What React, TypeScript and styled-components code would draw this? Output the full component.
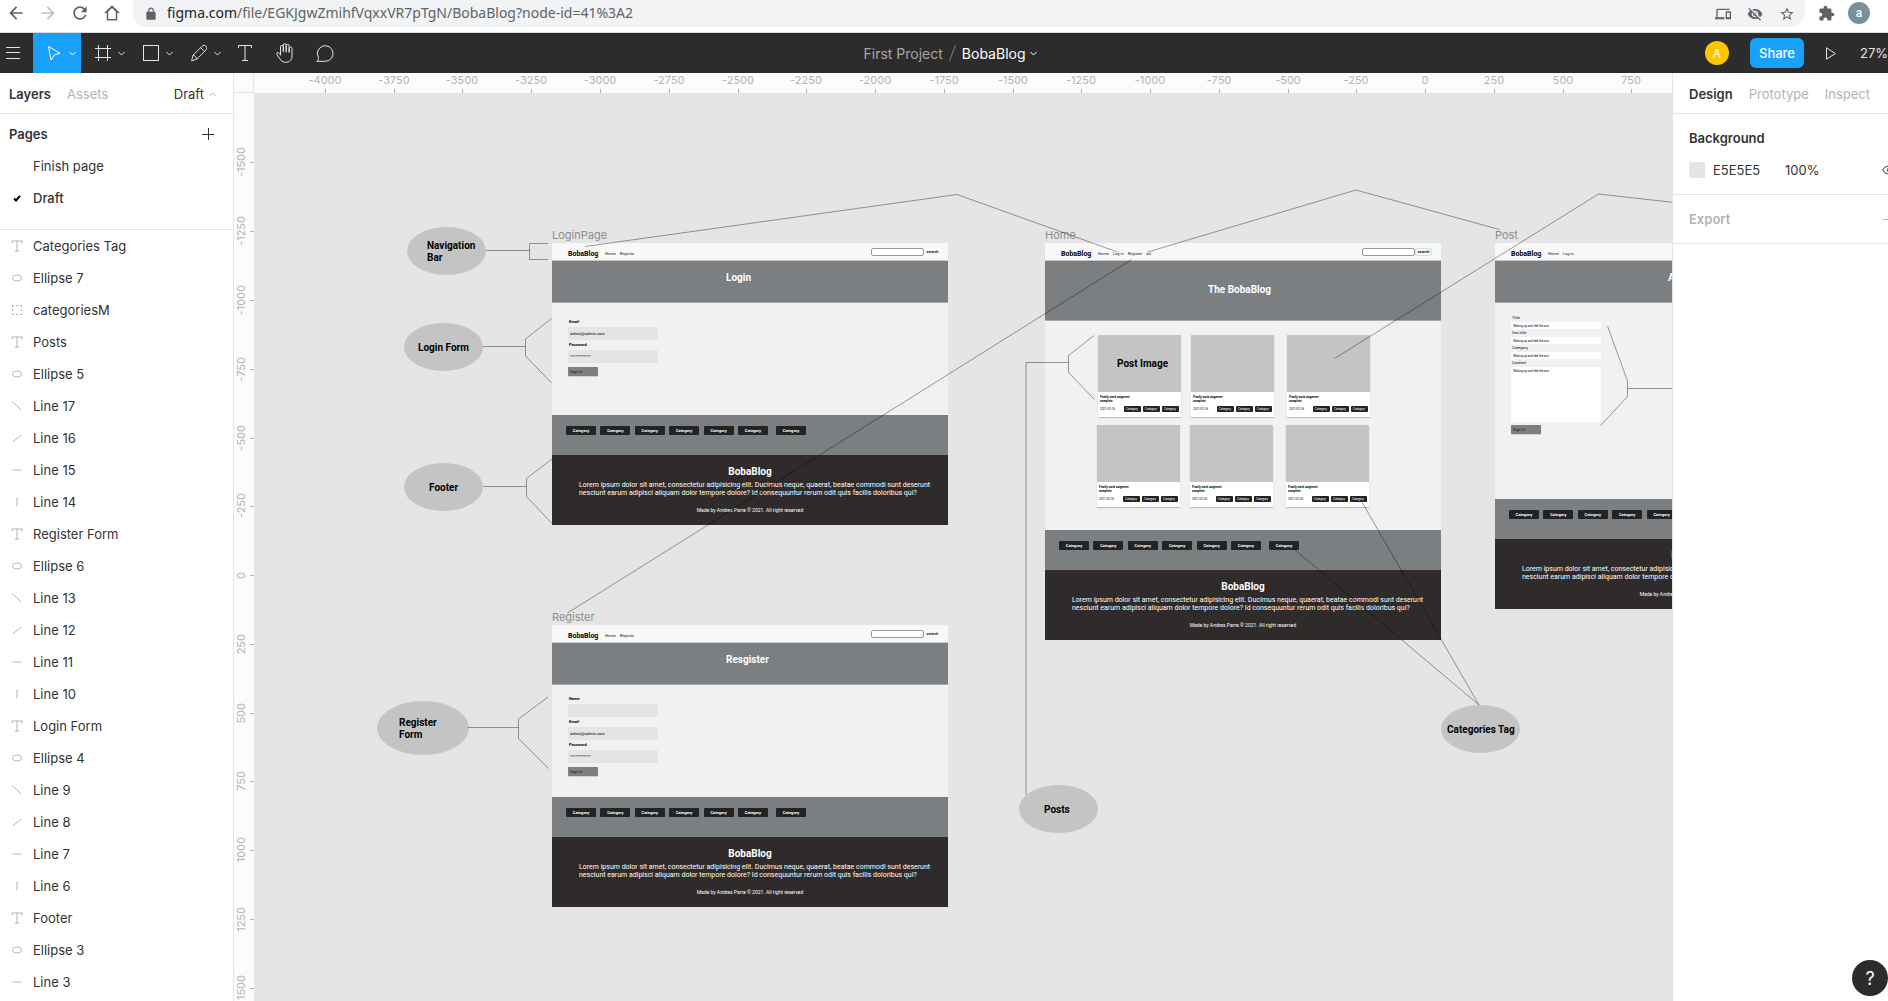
import React from "react";
import styled, { createGlobalStyle } from "styled-components";

const UI_FONT = `Inter, "Liberation Sans", sans-serif`;
const FRAME_FONT = `Roboto, "Liberation Sans", sans-serif`;

const GlobalStyle = createGlobalStyle`
  *, *::before, *::after { box-sizing: border-box; }
  html, body, #root { height: 100%; }
  body { margin: 0; overflow: hidden; background: #fff; font-family: ${UI_FONT}; }
  button, input, textarea { font: inherit; color: inherit; margin: 0; }
  button { border: 0; background: none; padding: 0; cursor: pointer; }
  ul { list-style: none; margin: 0; padding: 0; }
  h1, h2, h3, p { margin: 0; font-weight: inherit; font-size: inherit; }
  svg { display: block; flex: none; }
`;

const Page = styled.div`
  display: flex;
  flex-direction: column;
  height: 100vh;
  overflow: hidden;
`;

/* ---------- browser bar ---------- */

const BrowserBar = styled.header`
  display: flex;
  align-items: flex-start;
  flex: none;
  height: 33px;
  border-bottom: 1px solid #dadce0;
  background: #fff;
  color: #5f6368;
`;

const BrowserButton = styled.button<{ $dim?: boolean; $width?: number }>`
  display: flex;
  align-items: center;
  justify-content: center;
  width: ${(p) => p.$width ?? 32}px;
  height: 26px;
  color: ${(p) => (p.$dim ? "#bdc1c6" : "#5f6368")};
`;

const NavButtons = styled.div`
  display: flex;
  width: 133px;
`;

const AddressBar = styled.div`
  display: flex;
  align-items: center;
  flex: 1;
  min-width: 0;
  height: 27px;
  padding: 0 2px 0 11px;
  border-radius: 0 0 14px 14px;
  background: #f1f3f4;
`;

const AddressText = styled.a`
  flex: 1;
  min-width: 0;
  margin-left: 9px;
  color: #5f6368;
  font: 14px/24px "Noto Sans", sans-serif;
  height: 26px;
  text-decoration: none;
  white-space: nowrap;
  b { font-weight: 400; color: #202124; }
`;

const ProfileBadge = styled.button`
  width: 22px;
  height: 22px;
  margin: 2px 18px 0 0;
  border-radius: 50%;
  background: #78909c;
  color: #fff;
  font: 500 12px/20px Roboto, sans-serif;
`;

/* ---------- toolbar ---------- */

const Toolbar = styled.nav`
  display: grid;
  grid-template-columns: 1fr auto 1fr;
  align-items: center;
  flex: none;
  height: 40px;
  background: #2c2c2c;
  color: #fff;
`;

const Tools = styled.div`
  display: flex;
  height: 40px;
`;

const Tool = styled.button`
  display: flex;
  align-items: center;
  justify-content: center;
  width: 40px;
  color: #e5e5e5;
`;

const MenuTool = styled(Tool)`
  justify-content: flex-start;
  width: 33px;
  padding-left: 6px;
`;

const DropTool = styled(Tool)<{ $active?: boolean }>`
  justify-content: flex-start;
  gap: 7px;
  width: 48px;
  padding-left: 14px;
  color: ${(p) => (p.$active ? "#fff" : "#e5e5e5")};
  background: ${(p) => (p.$active ? "#18a0fb" : "transparent")};
`;

const FileTitle = styled.div`
  display: flex;
  align-items: center;
  gap: 6px;
  padding-left: 12px;
  font-size: 14px;
`;

const ProjectLink = styled.a`
  color: #a6a6a6;
  text-decoration: none;
`;

const FileButton = styled.button`
  display: flex;
  align-items: center;
  gap: 4px;
`;

const Actions = styled.div`
  display: flex;
  align-items: center;
  justify-content: flex-end;
`;

const UserBadge = styled.button`
  width: 24px;
  height: 24px;
  border-radius: 50%;
  background: #ffc700;
  font-size: 12px;
`;

const ShareButton = styled.button`
  width: 54px;
  height: 30px;
  margin: 0 22px 0 21px;
  border-radius: 6px;
  background: #18a0fb;
  font-size: 13px;
  font-weight: 500;
`;

const ZoomButton = styled.button`
  width: 28px;
  margin-left: 24px;
  color: #e5e5e5;
  font-size: 13px;
  text-align: left;
`;

/* ---------- side panels ---------- */

const Workspace = styled.div`
  display: flex;
  flex: 1;
  min-height: 0;
`;

const LeftPanel = styled.aside`
  display: flex;
  flex-direction: column;
  flex: 0 0 234px;
  border-right: 1px solid #e5e5e5;
  background: #fff;
  color: #333;
  font-size: 13px;
  overflow: hidden;
`;

const RightPanel = styled.aside`
  flex: 0 0 216px;
  border-left: 1px solid #e5e5e5;
  background: #fff;
  color: #333;
  font-size: 13px;
  overflow: hidden;
`;

const Tabs = styled.div<{ $pad: number }>`
  display: flex;
  align-items: center;
  flex: none;
  gap: 16px;
  height: 41px;
  padding: 2px 17px 0 ${(p) => p.$pad}px;
  border-bottom: 1px solid #e5e5e5;
`;

const Tab = styled.button<{ $active?: boolean }>`
  font-weight: ${(p) => (p.$active ? 600 : 400)};
  color: ${(p) => (p.$active ? "#333" : "#b3b3b3")};
`;

const PageSwitch = styled.button`
  display: flex;
  align-items: center;
  gap: 5px;
  margin-left: auto;
  svg { color: #b3b3b3; }
`;

const Pages = styled.section`
  flex: none;
  height: 116px;
  border-bottom: 1px solid #e5e5e5;
`;

const PagesHeader = styled.div`
  display: flex;
  align-items: center;
  justify-content: space-between;
  height: 36px;
  padding: 4px 19px 0 9px;
  font-weight: 600;
`;

const PageRow = styled.button<{ $current?: boolean }>`
  display: flex;
  align-items: center;
  width: 100%;
  height: 32px;
  font-weight: ${(p) => (p.$current ? 500 : 400)};
`;

const IconSlot = styled.span`
  display: flex;
  justify-content: center;
  flex: none;
  width: 33px;
  color: #b3b3b3;
`;

const CheckSlot = styled(IconSlot)`
  color: #000;
`;

const LayerList = styled.ul`
  flex: 1;
  min-height: 0;
  overflow: hidden;
`;

const LayerRow = styled.button`
  display: flex;
  align-items: center;
  width: 100%;
  height: 32px;
  text-align: left;
`;

const PropertySection = styled.section<{ $height: number; $muted?: boolean }>`
  display: flex;
  flex-direction: column;
  justify-content: center;
  gap: 15px;
  height: ${(p) => p.$height}px;
  padding-left: 16px;
  border-bottom: 1px solid #e5e5e5;
  color: ${(p) => (p.$muted ? "#b3b3b3" : "#333")};
`;

const PropertyTitle = styled.h2`
  display: flex;
  align-items: center;
  justify-content: space-between;
  font-weight: 600;
`;

const PropertyRow = styled.div`
  display: grid;
  grid-template-columns: 24px 72px 97px 6px;
  align-items: center;
  height: 17px;
`;

const Swatch = styled.span`
  width: 16px;
  height: 16px;
  background: #e5e5e5;
`;

const PropertyInput = styled.input`
  width: 64px;
  height: 17px;
  padding: 0;
  border: 0;
  outline: 0;
  background: none;
`;

const ClippedIcon = styled.span`
  width: 6px;
  overflow: hidden;
`;

const HelpButton = styled.button`
  position: fixed;
  right: 0;
  bottom: 5px;
  width: 36px;
  height: 36px;
  border-radius: 50%;
  background: #2c2c2c;
  color: #fff;
  font-size: 18px;
`;

/* ---------- canvas and rulers ---------- */

const Stage = styled.main`
  display: grid;
  grid-template-columns: 20px 1fr;
  grid-template-rows: 20px 1fr;
  flex: 1;
  min-width: 0;
  background: #fcfcfc;
`;

const RulerCorner = styled.div`
  border-right: 1px solid #e5e5e5;
  border-bottom: 1px solid #e5e5e5;
`;

const Ruler = styled.div`
  position: relative;
  overflow: hidden;
  color: #b3b3b3;
  font-size: 11px;
  line-height: 15px;
`;

const TopMark = styled.span`
  position: absolute;
  top: 0;
  display: flex;
  flex-direction: column;
  align-items: center;
  justify-content: space-between;
  width: 40px;
  height: 20px;
  margin-left: -20px;
  &::after { content: ""; width: 1px; height: 4px; background: #b3b3b3; }
`;

const SideMark = styled.span`
  position: absolute;
  left: 0;
  display: flex;
  align-items: center;
  justify-content: space-between;
  width: 20px;
  height: 40px;
  margin-top: -20px;
  &::after { content: ""; width: 4px; height: 1px; background: #b3b3b3; }
`;

const SideLabel = styled.span`
  writing-mode: vertical-rl;
  rotate: 180deg;
`;

const Canvas = styled.div`
  position: relative;
  overflow: hidden;
  background: #e5e5e5;
  font-family: ${FRAME_FONT};
`;

const Connectors = styled.svg`
  position: absolute;
  inset: 0;
  width: 100%;
  height: 100%;
  pointer-events: none;
`;

const Bubble = styled.div<{ $x: number; $y: number; $inset: number; $large?: boolean }>`
  position: absolute;
  left: ${(p) => p.$x}px;
  top: ${(p) => p.$y}px;
  display: flex;
  align-items: center;
  width: ${(p) => (p.$large ? 92 : 79)}px;
  height: ${(p) => (p.$large ? 54 : 48)}px;
  padding: 1px 0 0 ${(p) => p.$inset}px;
  border-radius: 50%;
  background: #c4c4c4;
  color: #000;
  font-size: 10px;
  font-weight: 700;
  line-height: 12px;
  white-space: pre;
`;

/* ---------- wireframe frames ---------- */

const FrameBox = styled.article<{ $x: number; $y: number }>`
  position: absolute;
  left: ${(p) => p.$x}px;
  top: ${(p) => p.$y}px;
  width: 396px;
`;

const FrameName = styled.h2`
  height: 16px;
  color: #8c8c8c;
  font: 400 11px/16px ${UI_FONT};
`;

const SiteHeader = styled.div`
  display: flex;
  align-items: center;
  height: 18px;
  padding: 4px 9px 0 16px;
  border-bottom: 1px solid #c8c8c8;
  background: #f8f8f8;
  color: #000;
`;

const Brand = styled.span`
  width: 37px;
  font-size: 7px;
  font-weight: 700;
  line-height: 8px;
`;

const SiteNav = styled.nav`
  display: flex;
  gap: 4px;
  font-size: 4px;
  line-height: 8px;
`;

const NavLink = styled.a`
  color: #222;
  text-decoration: none;
`;

const SearchGroup = styled.div<{ $outlined?: boolean }>`
  display: flex;
  align-items: center;
  gap: ${(p) => (p.$outlined ? 0 : 2)}px;
  height: 8px;
  margin: 0 0 4px auto;
`;

const SearchInput = styled.input`
  width: 53px;
  height: 8px;
  padding: 0 1px;
  border: 1px solid #999;
  border-radius: 2px;
  background: #fff;
  font-size: 4px;
`;

const SearchButton = styled.button<{ $outlined?: boolean }>`
  width: ${(p) => (p.$outlined ? 17 : 13)}px;
  height: 8px;
  border: ${(p) => (p.$outlined ? "1px solid #cfe8cf" : "0")};
  border-radius: 2px;
  font-size: 4px;
  font-weight: 500;
  line-height: 6px;
`;

const Hero = styled.div<{ $tall?: boolean; $indent: number }>`
  height: ${(p) => (p.$tall ? 60 : 42)}px;
  padding: ${(p) => (p.$tall ? 23 : 11)}px 0 0 ${(p) => p.$indent}px;
  border-bottom: 1px solid #a8aaab;
  background: #7b7f82;
  color: #fff;
  font-size: 10px;
  font-weight: 700;
  line-height: 12px;
  white-space: nowrap;
`;

const SiteBody = styled.div<{ $height: number }>`
  height: ${(p) => p.$height}px;
  background: #f1f1f1;
`;

const Form = styled.form<{ $top: number; $gap: number }>`
  display: flex;
  flex-direction: column;
  gap: ${(p) => p.$gap}px;
  width: 106px;
  padding: ${(p) => p.$top}px 0 0 16px;
  color: #000;
`;

const Field = styled.div<{ $gap: number }>`
  display: flex;
  flex-direction: column;
  gap: ${(p) => p.$gap}px;
`;

const FieldLabel = styled.label<{ $bold?: boolean }>`
  padding-left: 1px;
  font-size: 4px;
  font-weight: ${(p) => (p.$bold ? 700 : 400)};
  line-height: 6px;
`;

const FieldInput = styled.input<{ $small?: boolean }>`
  width: 90px;
  height: ${(p) => (p.$small ? 7 : 13)}px;
  padding: 0 2px;
  border: 0;
  border-radius: 1px;
  outline: 0;
  background: ${(p) => (p.$small ? "#fff" : "#e5e5e5")};
  font-size: ${(p) => (p.$small ? 3 : 4)}px;
`;

const FieldArea = styled.textarea`
  width: 90px;
  height: 55px;
  padding: 2px;
  border: 0;
  border-radius: 1px;
  outline: 0;
  resize: none;
  background: #fff;
  font-size: 3px;
  line-height: 4px;
`;

const SubmitButton = styled.button`
  width: 30px;
  height: 9px;
  margin-top: 2px;
  padding-left: 2px;
  border-radius: 1px;
  background: #7b7f82;
  box-shadow: 0 1px 1px rgba(0, 0, 0, 0.15);
  color: #111;
  font-size: 4px;
  line-height: 9px;
  text-align: left;
`;

const CategoryBar = styled.div`
  display: flex;
  align-items: flex-start;
  gap: 8px;
  height: 40px;
  padding: 11px 0 0 14px;
  background: #7b7f82;
`;

const CategoryRow = styled.div`
  display: flex;
  justify-content: space-between;
  width: 202px;
`;

const CategoryButton = styled.button`
  width: 30px;
  height: 9px;
  border-radius: 1px;
  background: #222325;
  color: #fff;
  font-size: 4px;
  font-weight: 700;
  line-height: 9px;
  text-align: center;
`;

const SiteFooter = styled.footer`
  height: 70px;
  padding: 11px 0 0 27px;
  background: #2f2b2a;
  color: #fff;
`;

const FooterTitle = styled.h3`
  padding-right: 27px;
  font-size: 10px;
  font-weight: 700;
  line-height: 12px;
  text-align: center;
`;

const FooterText = styled.p`
  margin-top: 3px;
  font-size: 7px;
  line-height: 8px;
  white-space: pre;
`;

const FooterNote = styled.p`
  margin-top: 10px;
  padding-right: 27px;
  font-size: 5px;
  line-height: 6px;
  text-align: center;
`;

const PostGrid = styled.div<{ $top: number; $left: number }>`
  display: grid;
  grid-template-columns: 93px 96px 83px;
  padding: ${(p) => p.$top}px 0 0 ${(p) => p.$left}px;
`;

const PostCard = styled.div`
  width: 83px;
  height: 82px;
  background: #fff;
  box-shadow: 0 1px 1px rgba(0, 0, 0, 0.2);
  color: #000;
`;

const PostPicture = styled.div`
  height: 57px;
  padding: 23px 0 0 19px;
  background: #c4c4c4;
  font-size: 10px;
  font-weight: 700;
  line-height: 12px;
`;

const PostName = styled.h3`
  padding: 3px 2px 0;
  font-size: 3px;
  font-weight: 700;
  line-height: 4px;
  white-space: pre;
`;

const PostMeta = styled.div`
  display: flex;
  align-items: center;
  gap: 2px;
  margin-top: 3px;
  padding: 0 2px;
`;

const PostDate = styled.span`
  flex: 1;
  font-size: 3px;
  line-height: 6px;
`;

const PostTag = styled.button`
  width: 17px;
  height: 6px;
  padding-left: 2px;
  border-radius: 1px;
  background: #222325;
  color: #fff;
  font-size: 3px;
  line-height: 6px;
  text-align: left;
`;

/* ---------- icons ---------- */

const Chevron = ({ up = false }: { up?: boolean }) => (
  <svg width="7" height="5" viewBox="0 0 7 5" fill="none" stroke="currentColor">
    <path d={up ? "M.5 4 3.5 1l3 3" : "M.5 1 3.5 4l3-3"} />
  </svg>
);

const toolIcons = {
  menu: (
    <svg width="14" height="12" viewBox="0 0 14 12" stroke="currentColor">
      <path d="M0 .5h14M0 5.500h14M0 11.500h14" />
    </svg>
  ),
  move: (
    <svg width="15" height="18" viewBox="0 0 15 18" fill="none" stroke="currentColor" strokeLinejoin="round">
      <path d="M1.500 2.500 13 9.300 7.500 10.800 4 16z" />
    </svg>
  ),
  frame: (
    <svg width="16" height="16" viewBox="0 0 16 16" fill="none" stroke="currentColor">
      <path d="M3.500 0v16M12.500 0v16M0 3.500h16M0 12.500h16" />
    </svg>
  ),
  rect: (
    <svg width="16" height="16" viewBox="0 0 16 16" fill="none" stroke="currentColor">
      <rect x=".5" y=".5" width="15" height="15" />
    </svg>
  ),
  pen: (
    <svg width="16" height="18" viewBox="0 0 17 18" fill="none" stroke="currentColor" strokeLinejoin="round">
      <path d="M.7 17.300 2 11.500 12 1.700a2.700 2.700 0 0 1 4 4L6 15.700zM10.300 3.400l4 4M2 11.500c2 0 4 2 4 4.200" />
    </svg>
  ),
  text: (
    <svg width="14" height="16" viewBox="0 0 14 16" fill="none" stroke="currentColor">
      <path d="M.5 3V.5h13V3M7 .5v15M4 15.500h6" />
    </svg>
  ),
  hand: (
    <svg width="18" height="20" viewBox="0 0 18 20" fill="none" stroke="currentColor" strokeLinejoin="round" strokeLinecap="round">
      <path d="M4.500 12V3.800a1.400 1.400 0 0 1 2.800 0V9M7.300 8V2a1.400 1.400 0 0 1 2.900 0v7M10.200 8V2.800a1.400 1.400 0 0 1 2.900 0V9M13.100 9V5.500a1.400 1.400 0 0 1 2.900 0V13c0 3.500-2 6.300-6.200 6.300-3.500 0-4.800-1.500-6.300-4L.9 11.500c-.6-1.700 1-2.700 2.200-1.300l1.400 1.600" />
    </svg>
  ),
  comment: (
    <svg width="18" height="17" viewBox="0 0 18 17" fill="none" stroke="currentColor" strokeLinejoin="round">
      <path d="M.7 16.300c1.600-.7 2-2 1.700-4A7.800 7.800 0 1 1 9.600 16.300z" />
    </svg>
  ),
};

type LayerKind = "text" | "ellipse" | "group" | "down" | "up" | "flat" | "tall";

const layerPaths: Record<LayerKind, React.ReactNode> = {
  text: <path d="M1 3.500V1h10v2.500M6 1v10M4 11h4" />,
  ellipse: <ellipse cx="6" cy="6" rx="4.500" ry="3" />,
  group: <path d="M1.500 3V1.500H3M5 1.500h2M9 1.500h1.500V3M10.500 5v2M10.500 9v1.500H9M7 10.500H5M3 10.500H1.500V9M1.500 7V5" />,
  down: <path d="M1.500 1.500l9 9" />,
  up: <path d="M1.500 10l9-7" />,
  flat: <path d="M1.500 6h9" />,
  tall: <path d="M6 1.500v9" />,
};

const LayerIcon = ({ kind }: { kind: LayerKind }) => (
  <svg width="12" height="12" viewBox="0 0 12 12" fill="none" stroke="currentColor">
    {layerPaths[kind]}
  </svg>
);

const materialPaths = {
  back: "M20 11H7.830l5.590-5.590L12 4l-8 8 8 8 1.410-1.410L7.830 13H20v-2z",
  forward: "M12 4l-1.410 1.410L16.170 11H4v2h12.170l-5.580 5.590L12 20l8-8z",
  reload:
    "M17.650 6.350A7.958 7.958 0 0 0 12 4c-4.420 0-7.990 3.580-7.990 8s3.570 8 7.990 8c3.730 0 6.840-2.550 7.730-6h-2.080A5.990 5.990 0 0 1 12 18c-3.310 0-6-2.690-6-6s2.690-6 6-6c1.660 0 3.140.69 4.220 1.780L13 11h7V4l-2.350 2.350z",
  home: "M12 1.500 1.500 12H5v10h14V12h3.500L12 1.500zM7 20v-9.700l5-5 5 5V20z",
  lock: "M18 8h-1V6c0-2.760-2.240-5-5-5S7 3.240 7 6v2H6c-1.100 0-2 .9-2 2v10c0 1.100.9 2 2 2h12c1.100 0 2-.9 2-2V10c0-1.100-.9-2-2-2zM9 6a3 3 0 0 1 6 0v2H9z",
  devices:
    "M4 6h18V4H4c-1.100 0-2 .9-2 2v11H0v3h14v-3H4V6zm19 2h-6c-.55 0-1 .45-1 1v10c0 .55.45 1 1 1h6c.55 0 1-.45 1-1V9c0-.55-.45-1-1-1zm-1 9h-4v-7h4v7z",
  eyeOff:
    "M12 7c2.760 0 5 2.240 5 5 0 .65-.13 1.260-.36 1.830l2.920 2.920c1.510-1.260 2.700-2.890 3.430-4.750-1.730-4.390-6-7.500-11-7.500-1.400 0-2.740.25-3.980.7l2.160 2.160C10.740 7.130 11.350 7 12 7zM2 4.270l2.280 2.280.46.46A11.800 11.800 0 0 0 1 12c1.730 4.390 6 7.500 11 7.500 1.550 0 3.030-.3 4.380-.84l.42.42L19.730 22 21 20.730 3.270 3 2 4.270zM7.530 9.800l1.550 1.550c-.05.21-.08.43-.08.65 0 1.660 1.340 3 3 3 .22 0 .44-.03.65-.08l1.550 1.550c-.67.33-1.410.53-2.200.53-2.760 0-5-2.240-5-5 0-.79.2-1.530.53-2.200zm4.310-.78 3.150 3.150.02-.16c0-1.660-1.340-3-3-3l-.17.01z",
  star: "M22 9.240l-7.190-.62L12 2 9.190 8.630 2 9.240l5.460 4.730L5.820 21 12 17.270 18.180 21l-1.630-7.030L22 9.240zM12 15.400l-3.760 2.270 1-4.280-3.320-2.880 4.380-.38L12 6.100l1.710 4.040 4.380.38-3.320 2.880 1 4.280L12 15.400z",
  puzzle:
    "M20.500 11H19V7c0-1.100-.9-2-2-2h-4V3.500a2.500 2.500 0 0 0-5 0V5H4c-1.100 0-1.990.9-1.990 2v3.800H3.500c1.490 0 2.700 1.210 2.700 2.700s-1.210 2.700-2.700 2.700H2V20c0 1.100.9 2 2 2h3.800v-1.500c0-1.490 1.210-2.700 2.700-2.700s2.700 1.210 2.700 2.700V22H17c1.100 0 2-.9 2-2v-4h1.500a2.500 2.500 0 0 0 0-5z",
};

const MaterialIcon = ({ name, size = 18 }: { name: keyof typeof materialPaths; size?: number }) => (
  <svg width={size} height={size} viewBox="0 0 24 24" fill="currentColor" fillRule="evenodd">
    <path d={materialPaths[name]} />
  </svg>
);

/* ---------- data ---------- */

const layers: [LayerKind, string][] = [
  ["text", "Categories Tag"],
  ["ellipse", "Ellipse 7"],
  ["group", "categoriesM"],
  ["text", "Posts"],
  ["ellipse", "Ellipse 5"],
  ["down", "Line 17"],
  ["up", "Line 16"],
  ["flat", "Line 15"],
  ["tall", "Line 14"],
  ["text", "Register Form"],
  ["ellipse", "Ellipse 6"],
  ["down", "Line 13"],
  ["up", "Line 12"],
  ["flat", "Line 11"],
  ["tall", "Line 10"],
  ["text", "Login Form"],
  ["ellipse", "Ellipse 4"],
  ["down", "Line 9"],
  ["up", "Line 8"],
  ["flat", "Line 7"],
  ["tall", "Line 6"],
  ["text", "Footer"],
  ["ellipse", "Ellipse 3"],
  ["flat", "Line 3"],
];

const ZOOM = 0.275;
const ORIGIN_X = 1171;
const ORIGIN_Y = 482;
const marks = (from: number, to: number) =>
  Array.from({ length: (to - from) / 250 + 1 }, (_, i) => from + i * 250);

const connectorPaths = [
  "M486 250.500H529.500M548 243.500H529.500V259.500H548",
  "M483 346.500H525.500M551.500 318.500L525.500 339V356L551.500 383",
  "M483 486.500H526.500M552 459L526.500 478.500V496.500L552 523.500",
  "M468 727.500H518.500M548 697L518.500 719V738.500L548.500 768.500",
  "M585 246.500L957 194.500L1117.500 252",
  "M1147.500 252L1356 190L1499.500 229.500",
  "M1334.500 358.500L1598.500 194L1760 212",
  "M1131.500 259.500L567.500 613",
  "M1026 795V362.500H1068.500M1094 335.500L1068.500 355.500V372.500L1094.500 399.500",
  "M1362.500 503L1479 705L1294 549",
  "M1607.500 326L1627.500 381V396.500L1600.500 425.500M1627.500 388.500H1760",
];

/* ---------- frame parts ---------- */

type FrameProps = {
  name: string;
  x: number;
  y: number;
  nav: string[];
  outlinedSearch?: boolean;
  title: string;
  titleIndent: number;
  tallHero?: boolean;
  bodyHeight: number;
  children: React.ReactNode;
};

const SiteFrame = (p: FrameProps) => (
  <FrameBox $x={p.x} $y={p.y}>
    <FrameName>{p.name}</FrameName>
    <SiteHeader>
      <Brand>BobaBlog</Brand>
      <SiteNav>
        {p.nav.map((item) => (
          <NavLink key={item} href="#">{item}</NavLink>
        ))}
      </SiteNav>
      <SearchGroup $outlined={p.outlinedSearch}>
        <SearchInput aria-label={`Search ${p.name}`} />
        <SearchButton $outlined={p.outlinedSearch}>search</SearchButton>
      </SearchGroup>
    </SiteHeader>
    <Hero $tall={p.tallHero} $indent={p.titleIndent}>{p.title}</Hero>
    <SiteBody $height={p.bodyHeight}>{p.children}</SiteBody>
    <CategoryBar>
      <CategoryRow>
        {[1, 2, 3, 4, 5, 6].map((n) => (
          <CategoryButton key={n}>Category</CategoryButton>
        ))}
      </CategoryRow>
      <CategoryButton>Category</CategoryButton>
    </CategoryBar>
    <SiteFooter>
      <FooterTitle>BobaBlog</FooterTitle>
      <FooterText>
        {"Lorem ipsum dolor sit amet, consectetur adipisicing elit. Ducimus neque, quaerat, beatae commodi sunt deserunt\nnesciunt earum adipisci aliquam dolor tempore dolore? Id consequuntur rerum odit quis facilis doloribus qui?"}
      </FooterText>
      <FooterNote>Made by Andres Parra © 2021. All right reserved</FooterNote>
    </SiteFooter>
  </FrameBox>
);

const AccountForm = ({ id, top, fields }: { id: string; top: number; fields: [string, string][] }) => (
  <Form $top={top} $gap={2}>
    {fields.map(([label, value]) => (
      <Field key={label} $gap={2}>
        <FieldLabel $bold htmlFor={`${id}-${label}`}>{label}</FieldLabel>
        <FieldInput id={`${id}-${label}`} defaultValue={value} />
      </Field>
    ))}
    <SubmitButton type="button">Sign In</SubmitButton>
  </Form>
);

const PostRow = ({ top, left, caption }: { top: number; left: number; caption?: string }) => (
  <PostGrid $top={top} $left={left}>
    {[0, 1, 2].map((n) => (
      <PostCard key={n}>
        <PostPicture>{n === 0 ? caption : null}</PostPicture>
        <PostName>{"Finally work asigment\ncomplete"}</PostName>
        <PostMeta>
          <PostDate>2021-02-26</PostDate>
          <PostTag>Category</PostTag>
          <PostTag>Category</PostTag>
          <PostTag>Category</PostTag>
        </PostMeta>
      </PostCard>
    ))}
  </PostGrid>
);

const sample = "Waking up and feel the sun";

export default function App() {
  return (
    <Page>
      <GlobalStyle />
      <BrowserBar>
        <NavButtons>
          <BrowserButton aria-label="Back"><MaterialIcon name="back" size={20} /></BrowserButton>
          <BrowserButton aria-label="Forward" $dim><MaterialIcon name="forward" size={20} /></BrowserButton>
          <BrowserButton aria-label="Reload"><MaterialIcon name="reload" size={20} /></BrowserButton>
          <BrowserButton aria-label="Home"><MaterialIcon name="home" size={18} /></BrowserButton>
        </NavButtons>
        <AddressBar>
          <MaterialIcon name="lock" size={14} />
          <AddressText href="#"><b>figma.com</b>/file/EGKJgwZmihfVqxxVR7pTgN/BobaBlog?node-id=41%3A2</AddressText>
          <BrowserButton aria-label="Send to device"><MaterialIcon name="devices" size={16} /></BrowserButton>
          <BrowserButton aria-label="Tracking blocked"><MaterialIcon name="eyeOff" size={16} /></BrowserButton>
          <BrowserButton aria-label="Bookmark"><MaterialIcon name="star" size={16} /></BrowserButton>
        </AddressBar>
        <BrowserButton aria-label="Extensions" $width={43}><MaterialIcon name="puzzle" size={17} /></BrowserButton>
        <ProfileBadge>a</ProfileBadge>
      </BrowserBar>

      <Toolbar>
        <Tools>
          <MenuTool aria-label="Menu">{toolIcons.menu}</MenuTool>
          <DropTool aria-label="Move" $active>{toolIcons.move}<Chevron /></DropTool>
          <DropTool aria-label="Frame">{toolIcons.frame}<Chevron /></DropTool>
          <DropTool aria-label="Rectangle">{toolIcons.rect}<Chevron /></DropTool>
          <DropTool aria-label="Pen">{toolIcons.pen}<Chevron /></DropTool>
          <Tool aria-label="Text">{toolIcons.text}</Tool>
          <Tool aria-label="Hand">{toolIcons.hand}</Tool>
          <Tool aria-label="Comment">{toolIcons.comment}</Tool>
        </Tools>
        <FileTitle>
          <ProjectLink href="#">First Project</ProjectLink>
          <svg width="7" height="16" viewBox="0 0 7 16" stroke="#808080"><path d="M6.500 0l-6 16" /></svg>
          <FileButton>BobaBlog <Chevron /></FileButton>
        </FileTitle>
        <Actions>
          <UserBadge>A</UserBadge>
          <ShareButton>Share</ShareButton>
          <svg width="10" height="13" viewBox="0 0 10 13" fill="none" stroke="#e5e5e5" strokeLinejoin="round">
            <path d="M.5 .8v11.400L9.300 6.500z" />
          </svg>
          <ZoomButton>27%</ZoomButton>
        </Actions>
      </Toolbar>

      <Workspace>
        <LeftPanel>
          <Tabs $pad={9}>
            <Tab $active>Layers</Tab>
            <Tab>Assets</Tab>
            <PageSwitch>Draft <Chevron up /></PageSwitch>
          </Tabs>
          <Pages>
            <PagesHeader>
              <h2>Pages</h2>
              <button aria-label="Add page">
                <svg width="12" height="12" viewBox="0 0 12 12" stroke="currentColor"><path d="M6.500 0v12M0 6.500h12" /></svg>
              </button>
            </PagesHeader>
            <PageRow><IconSlot />Finish page</PageRow>
            <PageRow $current>
              <CheckSlot>
                <svg width="8" height="7" viewBox="0 0 8 7" fill="none" stroke="currentColor" strokeWidth="2"><path d="M1 3.500l2 2L7 .8" /></svg>
              </CheckSlot>
              Draft
            </PageRow>
          </Pages>
          <LayerList>
            {layers.map(([kind, name]) => (
              <li key={name}>
                <LayerRow><IconSlot><LayerIcon kind={kind} /></IconSlot>{name}</LayerRow>
              </li>
            ))}
          </LayerList>
        </LeftPanel>

        <Stage>
          <RulerCorner />
          <Ruler>
            {marks(-4000, 750).map((v) => (
              <TopMark key={v} style={{ left: Math.round(ORIGIN_X + v * ZOOM) }}>{v}</TopMark>
            ))}
          </Ruler>
          <Ruler>
            {marks(-1500, 1500).map((v) => (
              <SideMark key={v} style={{ top: Math.round(ORIGIN_Y + v * ZOOM) }}><SideLabel>{v}</SideLabel></SideMark>
            ))}
          </Ruler>
          <Canvas>
            <SiteFrame name="LoginPage" x={298} y={134} nav={["Home", "Register"]} title="Login" titleIndent={174} bodyHeight={112}>
              <AccountForm id="login" top={16} fields={[["Email", "admin@admin.com"], ["Password", "************"]]} />
            </SiteFrame>
            <SiteFrame name="Register" x={298} y={516} nav={["Home", "Register"]} title="Resgister" titleIndent={174} bodyHeight={112}>
              <AccountForm id="register" top={11} fields={[["Name", ""], ["Email", "admin@admin.com"], ["Password", "************"]]} />
            </SiteFrame>
            <SiteFrame name="Home" x={791} y={134} nav={["Home", "Log in", "Register", "ad"]} outlinedSearch title="The BobaBlog" titleIndent={163} tallHero bodyHeight={209}>
              <PostRow top={14} left={53} caption="Post Image" />
              <PostRow top={8} left={52} />
            </SiteFrame>
            <SiteFrame name="Post" x={1241} y={134} nav={["Home", "Log in"]} title="Add Post" titleIndent={173} bodyHeight={196}>
              <Form $top={12} $gap={1}>
                {["Title", "Sec title", "Category"].map((label) => (
                  <Field key={label} $gap={1}>
                    <FieldLabel htmlFor={`post-${label}`}>{label}</FieldLabel>
                    <FieldInput $small id={`post-${label}`} defaultValue={sample} />
                  </Field>
                ))}
                <Field $gap={1}>
                  <FieldLabel htmlFor="post-content">Content</FieldLabel>
                  <FieldArea id="post-content" defaultValue={sample} />
                </Field>
                <SubmitButton type="button">Sign In</SubmitButton>
              </Form>
            </SiteFrame>

            <Bubble $x={153} $y={134} $inset={20}>{"Navigation\nBar"}</Bubble>
            <Bubble $x={150} $y={230} $inset={14}>Login Form</Bubble>
            <Bubble $x={150} $y={370} $inset={25}>Footer</Bubble>
            <Bubble $x={123} $y={608} $inset={22} $large>{"Register\nForm"}</Bubble>
            <Bubble $x={765} $y={692} $inset={25}>Posts</Bubble>
            <Bubble $x={1187} $y={612} $inset={6}>Categories Tag</Bubble>

            <Connectors aria-hidden="true">
              <g transform="translate(-254 -93)" fill="none" stroke="#000" strokeOpacity=".38">
                {connectorPaths.map((d) => (
                  <path key={d} d={d} />
                ))}
              </g>
            </Connectors>
          </Canvas>
        </Stage>

        <RightPanel>
          <Tabs $pad={16}>
            <Tab $active>Design</Tab>
            <Tab>Prototype</Tab>
            <Tab>Inspect</Tab>
          </Tabs>
          <PropertySection $height={81}>
            <PropertyTitle>Background</PropertyTitle>
            <PropertyRow>
              <Swatch />
              <PropertyInput aria-label="Background color" defaultValue="E5E5E5" />
              <PropertyInput aria-label="Background opacity" defaultValue="100%" />
              <ClippedIcon>
                <svg width="16" height="10" viewBox="0 0 16 10" fill="none" stroke="currentColor">
                  <path d="M.7 5C3-.5 13-.5 15.300 5 13 10.500 3 10.500.7 5z" />
                  <circle cx="8" cy="5" r="2.500" />
                </svg>
              </ClippedIcon>
            </PropertyRow>
          </PropertySection>
          <PropertySection $height={49} $muted>
            <PropertyTitle>
              Export
              <svg width="5" height="1" viewBox="0 0 5 1" stroke="currentColor"><path d="M0 .5h5" /></svg>
            </PropertyTitle>
          </PropertySection>
        </RightPanel>
      </Workspace>
      <HelpButton aria-label="Help">?</HelpButton>
    </Page>
  );
}
